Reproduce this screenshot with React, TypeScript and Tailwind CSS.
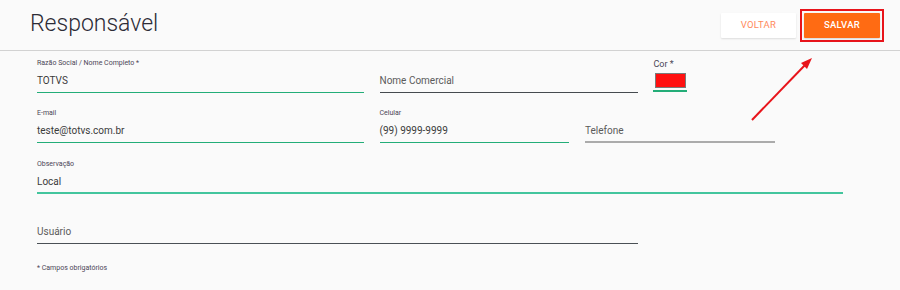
const font = "font-['Roboto',_'Liberation_Sans',_sans-serif]";

type FieldProps = {
  label?: string;
  value?: string;
  placeholder?: string;
  span: string;
  line: string;
};

function Field({ label, value, placeholder, span, line }: FieldProps) {
  return (
    <div className={`flex flex-col ${span}`}>
      <div className="h-[10px] text-[7px] leading-[10px] text-[#4a4656]">
        {label}
      </div>
      <div className={`flex h-[25px] items-center pt-[1px] ${line}`}>
        {value ? (
          <span className="text-[10px] text-[#3a3a3a]">{value}</span>
        ) : (
          <span className="text-[10px] text-[#5a5a5a]">{placeholder}</span>
        )}
      </div>
    </div>
  );
}

export default function App() {
  return (
    <div className={`relative h-[290px] w-[900px] overflow-hidden bg-[#fafafa] ${font}`}>
      <header className="flex h-[51px] items-center justify-between border-b border-[#d2d2d2] pl-[30px] pr-[16px]">
        <h1 className="pb-[1px] text-[23px] font-light text-[#2c2b36]">
          Responsável
        </h1>
        <div className="flex items-center gap-[4px]">
          <button className="h-[25px] w-[75px] rounded-[1px] bg-white text-[9.5px] tracking-[0.3px] text-[#ff8a5c] shadow-[0_1px_2px_rgba(0,0,0,0.12)]">
            VOLTAR
          </button>
          <div className="border-2 border-[#e8141b] p-[2px]">
            <button className="block h-[25px] w-[76px] rounded-[1px] bg-[#ff6b13] text-[9.5px] font-medium tracking-[0.3px] text-white shadow-[0_1px_2px_rgba(0,0,0,0.15)]">
              SALVAR
            </button>
          </div>
        </div>
      </header>

      <div className="w-[843px] pl-[37px]">
        <div className="mt-[7px] grid grid-cols-12 gap-x-4">
          <Field
            label="Razão Social / Nome Completo *"
            value="TOTVS"
            span="col-span-5"
            line="border-b border-[#23ad78]"
          />
          <Field
            placeholder="Nome Comercial"
            span="col-span-4"
            line="border-b border-[#454b4f]"
          />
          <div className="col-span-1 flex flex-col">
            <div className="h-[15px] text-[9px] leading-[13px] text-[#4a4656]">
              Cor *
            </div>
            <div className="-ml-px w-[34px] border-b-2 border-[#23ad78] pb-[2px] pl-[2px]">
              <div className="h-[15px] w-[31px] border border-[#7a7a7a] bg-[#ff1010]" />
            </div>
          </div>
        </div>

        <div className="mt-[15px] grid grid-cols-12 gap-x-4">
          <Field
            label="E-mail"
            value="teste@totvs.com.br"
            span="col-span-5"
            line="border-b border-[#23ad78]"
          />
          <Field
            label="Celular"
            value="(99) 9999-9999"
            span="col-span-3"
            line="border-b border-[#23ad78]"
          />
          <Field
            placeholder="Telefone"
            span="col-span-3"
            line="border-b-2 border-[#ababab]"
          />
        </div>

        <div className="mt-[16px] grid grid-cols-12 gap-x-4">
          <Field
            label="Observação"
            value="Local"
            span="col-span-12"
            line="border-b-2 border-[#43c59d]"
          />
        </div>

        <div className="mt-[15px] grid grid-cols-12 gap-x-4">
          <Field
            placeholder="Usuário"
            span="col-span-9"
            line="border-b border-[#4a5055]"
          />
        </div>

        <p className="mt-[19px] text-[7px] leading-[10px] text-[#4a4656]">
          * Campos obrigatórios
        </p>
      </div>

      <svg
        className="pointer-events-none absolute left-0 top-0"
        width="900"
        height="290"
        viewBox="0 0 900 290"
      >
        <line x1="752" y1="120" x2="806" y2="64" stroke="#e8141b" strokeWidth="2" />
        <polygon points="812,58 801,63 807,69" fill="#e8141b" />
      </svg>
    </div>
  );
}
